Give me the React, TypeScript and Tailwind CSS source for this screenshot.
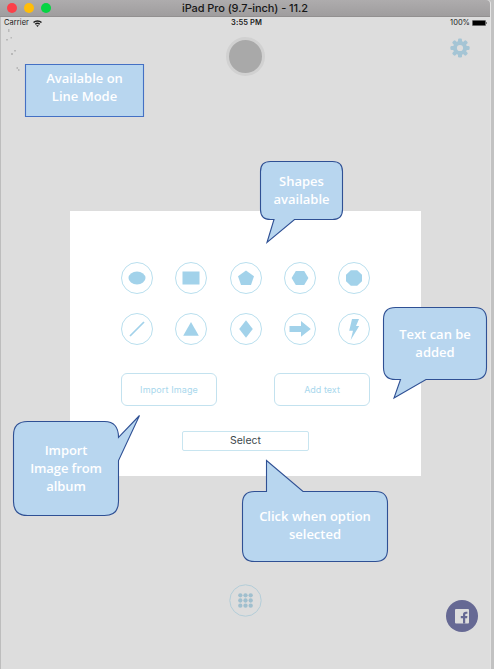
import React from "react";

const shapes: React.ReactNode[] = [
  <ellipse cx="16" cy="16" rx="8.5" ry="6.5" />,
  <rect x="7.5" y="9.5" width="17" height="13" />,
  <path d="M16 8.5 24 14.2 21 23H11L8 14.2Z" />,
  <path d="M7.6 16 11.8 9H20.2L24.4 16 20.2 23H11.8Z" />,
  <path d="M12.8 8.2H19.2L24 12.8V19.2L19.2 23.8H12.8L8 19.2V12.8Z" />,
  <path d="M9 23 23 9" fill="none" stroke="#a2d2ea" strokeWidth="1.7" />,
  <path d="M16 9 23.8 22.7H8.2Z" />,
  <path d="M16 7.3 22.8 16 16 24.7 9.2 16Z" />,
  <path d="M5.5 13H17V8L26.8 16 17 23.8V19H5.5Z" />,
  <path d="M14 6H21L18 13H21.2L12.7 27 15 17.7H11.2Z" />,
];

type CalloutProps = {
  className: string;
  path: string;
  stroke?: string;
  lines: string[];
};

function Callout({ className, path, stroke = "#2f5094", lines }: CalloutProps) {
  return (
    <div className={`absolute flex flex-col items-center text-center font-['Open_Sans','Noto_Sans',sans-serif] text-[13px] leading-[18px] font-semibold whitespace-nowrap text-white ${className}`}>
      <svg className="absolute inset-0 h-full w-full overflow-visible" fill="#b8d6ef" stroke={stroke} strokeWidth="1.1">
        <path d={path} />
      </svg>
      {lines.map((line) => (
        <span key={line} className="relative">{line}</span>
      ))}
    </div>
  );
}

function Gear() {
  return (
    <svg className="h-5 w-5" viewBox="-10 -10 20 20" fill="#a5c5d5">
      {[0, 45, 90, 135].map((a) => (
        <rect key={a} x="-2" y="-9.6" width="4" height="19.2" rx="1.3" transform={`rotate(${a})`} />
      ))}
      <circle r="7" />
      <circle r="3.1" fill="#dddddd" />
    </svg>
  );
}

export default function App() {
  return (
    <div className="relative flex h-[669px] w-[494px] overflow-hidden bg-[#c2c2c2] font-[Inter,'Liberation_Sans',sans-serif]">
      <div className="flex h-full w-[491px] shrink-0 flex-col rounded-tr-[4px] border-r border-[#e4e4e4] bg-[#dddddd]">
        <header className="flex h-[17px] shrink-0 items-center rounded-tr-[4px] border-b border-[#929090] bg-gradient-to-b from-[#aeacad] to-[#9f9d9e]">
          <div className="flex w-[182px] gap-[7px] pb-[1px] pl-[7px]">
            <span className="h-[10px] w-[10px] rounded-full bg-[#fc4049]" />
            <span className="h-[10px] w-[10px] rounded-full bg-[#ffbd08]" />
            <span className="h-[10px] w-[10px] rounded-full bg-[#05d443]" />
          </div>
          <h1 className="text-[11px] leading-none font-medium tracking-[-0.09px] whitespace-nowrap text-[#171717]">iPad Pro (9.7-inch) - 11.2</h1>
        </header>
        <main className="flex grow flex-col border-l border-[#bdbdbd]">
          <div className="grid h-[12px] grid-cols-3 items-center px-[3px] text-[7.5px] leading-none text-[#222]">
            <div className="flex items-center gap-[4px]">
              <span className="tracking-[0.05px]">Carrier</span>
              <svg className="h-[7px] w-[9px]" viewBox="0 0 18 14" fill="none" stroke="#1d1d1d" strokeWidth="3">
                <path d="M1 5a11.5 11.5 0 0 1 16 0M4.5 8.6a6.5 6.5 0 0 1 9 0" />
                <path d="M6.2 10.3h5.6L9 13.8z" fill="#1d1d1d" stroke="none" />
              </svg>
            </div>
            <span className="pl-[2px] text-center font-semibold tracking-[0.1px]">3:55 PM</span>
            <div className="flex items-center justify-end gap-[2px]">
              <span>100%</span>
              <span className="h-[6px] w-[14px] rounded-[1px] border border-[#666] bg-black" />
              <span className="-ml-[2px] h-[2px] w-[1px] bg-[#777]" />
            </div>
          </div>
          <div className="flex h-[182px] items-start">
            <svg className="h-[45px] w-[225px] shrink-0" fill="#b9b9b9">
              <path d="M7 0h1.5v3H7zM5 10h2v1.5H5zM9.5 8h1.5v1.5h-1.5zM13 21h2v1.5h-2zM10 24h2v2h-2zM15.500 38h1.5v2h-1.5zM17 40h1.500v2h-1.5z" />
            </svg>
            <span className="mt-[8px] h-[39px] w-[39px] shrink-0 rounded-full border-[3.5px] border-[#d1d1d1] bg-[#a9a9a9]" />
            <div className="mt-[9px] ml-[185px]"><Gear /></div>
          </div>
          <section className="ml-[69px] flex h-[265px] w-[351px] flex-col items-center bg-white pt-[51px]">
            <div className="grid grid-cols-[repeat(5,32px)] gap-x-[22.2px] gap-y-[19px]">
              {shapes.map((shape, i) => (
                <svg key={i} className="h-8 w-8" viewBox="0 0 32 32" fill="#a2d2ea">
                  <circle cx="16" cy="16" r="15.5" fill="white" stroke="#b9dfee" />
                  {shape}
                </svg>
              ))}
            </div>
            <div className="mt-[28px] flex w-[249px] justify-between text-[9px] text-[#a9d8ed]">
              <button className="h-[33px] w-[96px] rounded-[6px] border border-[#c3e2ef] tracking-[0.12px]">Import Image</button>
              <button className="h-[33px] w-[96px] rounded-[6px] border border-[#c3e2ef]">Add text</button>
            </div>
            <button className="mt-[25px] h-[20px] w-[127px] rounded-[2px] border border-[#c8e5f0] pt-[1px] text-[10.5px] leading-none text-[#3d484d]">Select</button>
          </section>
          <div className="mt-[108px] flex">
            <svg className="ml-[228px] h-[33px] w-[33px]" viewBox="0 0 33 33" fill="#a0bfce">
              <circle cx="16.5" cy="16.5" r="15.7" fill="none" stroke="#b3cdd8" />
              {[11.3, 16.5, 21.7].map((y) =>
                [11.3, 16.5, 21.7].map((x) => <circle key={`${x}-${y}`} cx={x} cy={y} r="2.15" />)
              )}
            </svg>
            <svg className="mt-[16px] ml-[184px] h-[32px] w-[32px]" viewBox="0 0 32 32">
              <circle cx="16" cy="16" r="16" fill="#666994" />
              <rect x="9" y="9" width="14" height="14.5" rx="1" fill="#dddddd" />
              <path d="M17 23.5V18.2H14.8V16H17V14.6Q17 11.8 20 11.8H21.4V13.8H20.3Q19.2 13.8 19.2 15V16H21.4L21.1 18.2H19.2V23.5Z" fill="#666994" />
            </svg>
          </div>
        </main>
      </div>

      <Callout
        className="top-[64px] left-[25px] h-[53px] w-[119px] pt-[5px]"
        path="M.5.5H118.5V52.5H.5Z"
        stroke="#4470c4"
        lines={["Available on", "Line Mode"]}
      />
      <Callout
        className="top-[161px] left-[260px] h-[59px] w-[83px] pt-[11px]"
        path="M10.5.5H72.5Q82.5.5 82.5 10.5V48.5Q82.5 58.5 72.5 58.5H34.5L7 81.5 14 58.5H10.5Q.5 58.5.5 48.5V10.5Q.5.5 10.5.5Z"
        lines={["Shapes", "available"]}
      />
      <Callout
        className="top-[307px] left-[383px] h-[73px] w-[104px] pt-[18px]"
        path="M12.5.5H91.5Q103.5.5 103.5 12.5V60.5Q103.5 72.5 91.5 72.5H43L11 91 17.5 72.5H12.5Q.5 72.5.5 60.5V12.5Q.5.5 12.5.5Z"
        lines={["Text can be", "added"]}
      />
      <Callout
        className="top-[421px] left-[13px] h-[95px] w-[106px] pt-[20px] tracking-[-0.1px]"
        path="M14.5.5H91.5Q105.500.5 105.5 16.5L126.5-5.5 105.5 39.5V80.5Q105.5 94.5 91.5 94.5H14.5Q.5 94.5.5 80.5V14.5Q.5.5 14.5.5Z"
        lines={["Import", "Image from", "album"]}
      />
      <Callout
        className="top-[491px] left-[242px] h-[71px] w-[146px] pt-[16px]"
        path="M12.5.5H24.5V-30.5L61 .5H133.5Q145.5.5 145.5 12.5V58.5Q145.5 70.5 133.5 70.5H12.5Q.5 70.5.5 58.5V12.5Q.5.5 12.5.5Z"
        lines={["Click when option", "selected"]}
      />
    </div>
  );
}
